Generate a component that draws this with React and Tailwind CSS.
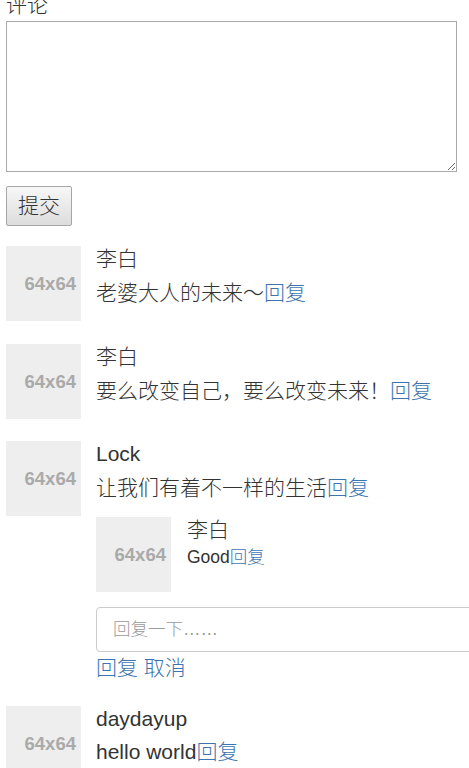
import React from "react";

const FONT = { fontFamily: '"Liberation Sans", "Noto Sans CJK SC", sans-serif' };

function Avatar() {
  return (
    <div className="flex h-[75px] w-[75px] shrink-0 items-center justify-end bg-[#eeeeee] pr-[5px] text-[18.5px] font-bold text-[#aaaaaa]">
      64x64
    </div>
  );
}

function Reply() {
  return <a className="cursor-pointer text-[#3d74b0]">回复</a>;
}

function Media({ name, children, small, gap = "mt-[9px]", className = "" }) {
  return (
    <div className={`flex ${className}`}>
      <Avatar />
      <div className={`min-w-0 ${small ? "ml-[16px]" : "ml-[15px]"}`}>
        <div className="whitespace-nowrap text-[21px] leading-[25px]">{name}</div>
        <div
          className={`whitespace-nowrap leading-[25px] ${
            small ? "mt-[3px] text-[17.5px]" : `${gap} text-[21px]`
          }`}
        >
          {children}
        </div>
      </div>
    </div>
  );
}

export default function App() {
  return (
    <div
      className="h-[768px] overflow-hidden bg-white px-[6px] font-light text-[#333333]"
      style={FONT}
    >
      <div className="-mt-[8px]">
        <label className="block text-[21px] leading-[25px]">评论</label>
        <textarea className="mt-[4px] block h-[151px] w-[451px] border border-[#a9a9a9] bg-white" />
        <button
          type="button"
          className="mt-[14px] block h-[40px] w-[66px] rounded-[2px] border border-[#a6a6a6] bg-gradient-to-b from-[#f7f7f7] to-[#dddddd] text-[21px] font-light text-[#333333]"
        >
          提交
        </button>
      </div>

      <div className="mt-[20px]">
        <Media name="李白">
          老婆大人的未来～<Reply />
        </Media>

        <Media name="李白" className="mt-[23px]">
          要么改变自己，要么改变未来！<Reply />
        </Media>

        <div className="mt-[22px] flex">
          <Avatar />
          <div className="ml-[15px] min-w-0">
            <div className="text-[21px] leading-[25px]">Lock</div>
            <div className="mt-[9px] whitespace-nowrap text-[21px] leading-[25px]">
              让我们有着不一样的生活<Reply />
            </div>
            <Media name="李白" small className="mt-[17px]">
              Good<Reply />
            </Media>
            <input
              type="text"
              placeholder="回复一下……"
              className="mt-[15px] block h-[45px] w-[420px] rounded-[4px] border border-[#cccccc] px-[16px] text-[17.5px] font-light placeholder:text-[#999999] focus:outline-none"
            />
            <div className="mt-[3px] text-[21px] leading-[25px] text-[#3d74b0]">
              <a className="cursor-pointer">回复</a> <a className="cursor-pointer">取消</a>
            </div>
          </div>
        </div>

        <Media name="daydayup" gap="mt-[8px]" className="mt-[26px]">
          hello world<Reply />
        </Media>
      </div>
    </div>
  );
}
